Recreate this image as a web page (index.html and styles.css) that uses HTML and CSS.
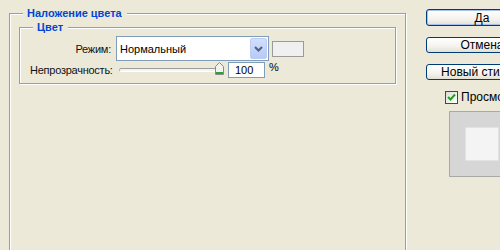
FILE: index.html
```html
<!DOCTYPE html>
<html lang="ru">
<head>
<meta charset="utf-8">
<title>Стиль слоя</title>
<link rel="stylesheet" href="styles.css">
</head>
<body>
<div class="dialog">
  <section class="group outer">
    <span class="legend">Наложение цвета</span>
    <section class="group inner">
      <span class="legend">Цвет</span>
      <div class="form">
        <label class="lbl">Режим:</label>
        <div class="ctl">
          <div class="select">
            <span class="select-text">Нормальный</span>
            <span class="select-btn">
              <svg width="9" height="6" viewBox="0 0 9 6"><path d="M1 1 L4.5 4.5 L8 1" fill="none" stroke="#4d6185" stroke-width="2"/></svg>
            </span>
          </div>
          <div class="swatch"></div>
        </div>
        <label class="lbl">Непрозрачность:</label>
        <div class="ctl ctl-op">
          <div class="slider">
            <div class="track"></div>
            <svg class="thumb" width="9" height="13" viewBox="0 0 9 13"><path d="M0.5 4.5 L4.5 0.5 L8.5 4.5 L8.5 12.5 L0.5 12.5 Z" fill="#f3f3ee" stroke="#8a8a8a"/><rect x="1" y="10" width="7" height="2" fill="#2f9e3f"/></svg>
          </div>
          <div class="num">100</div>
          <span class="pct">%</span>
        </div>
      </div>
    </section>
  </section>
  <aside class="side">
    <button class="btn btn-default">Да</button>
    <button class="btn">Отмена</button>
    <button class="btn">Новый стиль...</button>
    <label class="check">
      <span class="box"><svg width="11" height="11" viewBox="0 0 11 11"><path d="M2 5 L4.5 7.5 L9 2.5" fill="none" stroke="#21a121" stroke-width="2"/></svg></span>
      <span>Просмотр</span>
    </label>
    <div class="preview"><div class="preview-in"></div></div>
  </aside>
</div>
</body>
</html>
```

FILE: styles.css
```css
html, body {
  margin: 0;
  padding: 0;
  width: 500px;
  height: 250px;
  overflow: hidden;
  background: #ece9d8;
  font-family: "Liberation Sans", Arial, sans-serif;
  font-size: 11px;
  color: #000;
}

.dialog {
  display: flex;
  align-items: flex-start;
  padding: 9px 0 0 9px;
  gap: 20px;
}

.group {
  position: relative;
  border: 1px solid #9d9d9d;
  box-shadow: inset 1px 1px 0 #fff, 1px 1px 0 #fff;
  box-sizing: border-box;
}

.outer {
  margin-top: 4px;
  width: 397px;
  height: 300px;
  padding: 13px 9px 0 9px;
  flex: none;
}

.inner {
  padding: 8px 0 5px 10px;
}

.legend {
  position: absolute;
  top: -7px;
  left: 13px;
  padding: 0 5px 0 4px;
  background: #ece9d8;
  line-height: 13px;
  font-weight: bold;
  color: #0046d5;
  white-space: nowrap;
}

.form {
  display: grid;
  grid-template-columns: 81px auto;
  column-gap: 5px;
  row-gap: 1px;
  align-items: center;
}

.lbl {
  text-align: right;
  white-space: nowrap;
  letter-spacing: -0.25px;
  color: #111;
}

.ctl {
  display: flex;
  align-items: center;
  gap: 3px;
  height: 25px;
}

.ctl-op {
  height: 16px;
  gap: 0;
}

.select {
  box-sizing: border-box;
  width: 153px;
  height: 25px;
  border: 1px solid #7f9db9;
  background: #fff;
  display: flex;
  align-items: center;
  justify-content: space-between;
  padding: 1px 1px 1px 3px;
}

.select-text {
  font-size: 11px;
}

.select-btn {
  box-sizing: border-box;
  width: 17px;
  height: 21px;
  border: 1px solid #bccdf5;
  border-radius: 2px;
  background: linear-gradient(#d2defc, #b7caf6);
  display: flex;
  align-items: center;
  justify-content: center;
}

.swatch {
  box-sizing: border-box;
  width: 32px;
  height: 16px;
  border: 1px solid #9a9a9a;
  background: #f0f0f0;
}

.slider {
  position: relative;
  width: 112px;
  height: 16px;
  flex: none;
}

.track {
  position: absolute;
  left: 3px;
  top: 6px;
  width: 100px;
  height: 2px;
  border-top: 1px solid #9c9c9c;
  border-left: 1px solid #b0b0b0;
  border-bottom: 1px solid #fff;
  border-radius: 2px 0 0 2px;
  background: #f4f4f0;
}

.thumb {
  position: absolute;
  left: 99px;
  top: 0;
}

.num {
  box-sizing: border-box;
  width: 37px;
  height: 16px;
  border: 1px solid #7f9db9;
  background: #fff;
  padding-left: 6px;
  line-height: 14px;
}

.pct {
  margin-left: 4px;
  align-self: flex-start;
  line-height: 11px;
}

.side {
  display: flex;
  flex-direction: column;
  align-items: flex-start;
  flex: none;
}

.btn {
  box-sizing: border-box;
  width: 112px;
  height: 16px;
  margin: 11px 0 0;
  padding: 0;
  border: 1px solid #003c74;
  border-radius: 3px;
  background: linear-gradient(#ffffff, #f4f3ee 60%, #e3e0d4);
  font-family: "Liberation Sans", Arial, sans-serif;
  font-size: 12px;
  line-height: 14px;
  color: #000;
  text-align: center;
  white-space: nowrap;
}

.btn-default {
  margin-top: 0;
  height: 17px;
  box-shadow: inset 0 0 0 1px #a8bff3;
}

.check {
  display: flex;
  align-items: center;
  gap: 3px;
  margin: 11px 0 0 19px;
  font-size: 12px;
  line-height: 13px;
}

.box {
  box-sizing: border-box;
  width: 13px;
  height: 13px;
  border: 1px solid #1c5180;
  background: linear-gradient(135deg, #dcdcd7, #fff);
  display: flex;
  align-items: center;
  justify-content: center;
}

.preview {
  box-sizing: border-box;
  margin: 7px 0 0 23px;
  width: 66px;
  height: 66px;
  border: 1px solid #a9a9a9;
  background: #d6d6d6;
  display: flex;
  align-items: center;
  justify-content: center;
}

.preview-in {
  box-sizing: border-box;
  width: 34px;
  height: 34px;
  border: 1px solid #e2e2e2;
  background: #f4f4f4;
}
```
